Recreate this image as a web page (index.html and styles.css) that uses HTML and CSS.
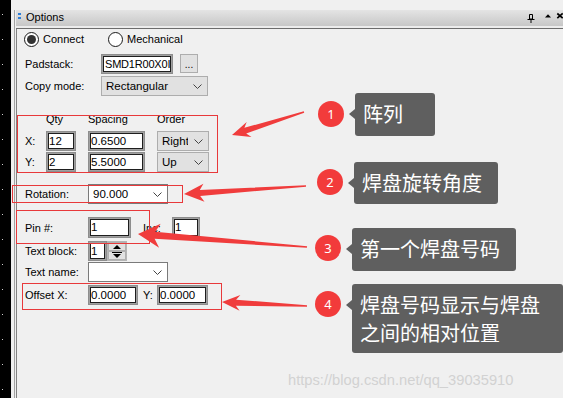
FILE: index.html
```html
<!DOCTYPE html>
<html>
<head>
<meta charset="utf-8">
<link rel="stylesheet" href="styles.css">
</head>
<body>
<div class="screen">
  <div class="rail"></div>
  <div class="panel">
    <div class="titlebar">
      <span class="grip"></span>
      <span class="title">Options</span>
      <svg class="tb-icons" width="36" height="16" viewBox="0 0 36 16">
        <path d="M2.5 4.5h3v4.5h-3z" fill="none" stroke="#000"/>
        <path d="M0.5 9.5h7M4 10v3" stroke="#000" fill="none"/>
        <path d="M18 7.5h6l-3-3.2z" fill="#000"/>
        <path d="M30.3 3.5l5.4 4.6M35.7 3.5l-5.4 4.6" stroke="#000" stroke-width="1.7"/>
      </svg>
    </div>
    <div class="content">
      <div class="row radios">
        <label class="radio first"><span class="circle checked"></span>Connect</label>
        <label class="radio"><span class="circle"></span>Mechanical</label>
      </div>
      <div class="row r-padstack">
        <span class="lbl wide">Padstack:</span>
        <span class="in w72 tight">SMD1R00X0I</span>
        <span class="btn">...</span>
      </div>
      <div class="row r-copy">
        <span class="lbl wide">Copy mode:</span>
        <span class="dd gray w107"><span class="dd-text">Rectangular</span><svg class="chev" width="9" height="5" viewBox="0 0 9 5"><path d="M0.5 0.5l4 4 4-4" fill="none" stroke="#444"/></svg></span>
      </div>
      <div class="array">
        <span></span><span class="hd">Qty</span><span class="hd">Spacing</span><span class="hd">Order</span>
        <span class="ax">X:</span><span class="in">12</span><span class="in">0.6500</span>
        <span class="dd gray"><span class="dd-text clip">Right</span><svg class="chev" width="9" height="5" viewBox="0 0 9 5"><path d="M0.5 0.5l4 4 4-4" fill="none" stroke="#444"/></svg></span>
        <span class="ax">Y:</span><span class="in">2</span><span class="in">5.5000</span>
        <span class="dd gray"><span class="dd-text">Up</span><svg class="chev" width="9" height="5" viewBox="0 0 9 5"><path d="M0.5 0.5l4 4 4-4" fill="none" stroke="#444"/></svg></span>
      </div>
      <div class="row r-rot">
        <span class="lbl">Rotation:</span>
        <span class="dd white w80"><span class="dd-text">90.000</span><svg class="chev" width="9" height="5" viewBox="0 0 9 5"><path d="M0.5 0.5l4 4 4-4" fill="none" stroke="#444"/></svg></span>
      </div>
      <div class="row r-pin">
        <span class="lbl">Pin #:</span>
        <span class="in w43">1</span>
        <span class="lbl inc">Inc:</span>
        <span class="in w28">1</span>
      </div>
      <div class="row r-block">
        <span class="lbl">Text block:</span>
        <span class="in w19">1</span>
        <span class="spin"><span class="sb up"></span><span class="sb down"></span></span>
      </div>
      <div class="row r-name">
        <span class="lbl">Text name:</span>
        <span class="dd white w80"><span class="dd-text"></span><svg class="chev" width="9" height="5" viewBox="0 0 9 5"><path d="M0.5 0.5l4 4 4-4" fill="none" stroke="#444"/></svg></span>
      </div>
      <div class="row r-off">
        <span class="lbl">Offset X:</span>
        <span class="in w50">0.0000</span>
        <span class="lbl ylbl">Y:</span>
        <span class="in w51">0.0000</span>
      </div>
    </div>
  </div>

  <div class="redbox rb1"></div>
  <div class="redbox rb2"></div>
  <div class="redbox rb3"></div>
  <div class="redbox rb4"></div>

  <svg class="arrows" width="563" height="398" viewBox="0 0 563 398">
    <polygon points="303.8,111.3 244.4,127.8 246.7,121.9 232,135 251.5,137.1 246.2,133.6 304.2,112.7"/>
    <polygon points="306,185.2 199.8,190 203.4,183.7 184,194 204.5,201.7 200.2,195.9 306,186.8"/>
    <polygon points="307.1,246.2 155.2,231.8 160.7,223.7 138,234 159.1,247.7 154.6,238.8 306.9,247.8"/>
    <polygon points="307,305.3 236.1,299.7 240.4,294.9 222,302 239.6,310.8 235.9,305.7 307,306.7"/>
  </svg>

  <div class="num n1">1</div>
  <div class="num n2">2</div>
  <div class="num n3">3</div>
  <div class="num n4">4</div>

  <div class="callout c1">阵列</div>
  <div class="callout c2">焊盘旋转角度</div>
  <div class="callout c3">第一个焊盘号码</div>
  <div class="callout c4">焊盘号码显示与焊盘<br>之间的相对位置</div>

  <div class="watermark">https://blog.csdn.net/qq_39035910</div>
</div>
</body>
</html>
```
FILE: styles.css
```css
* { box-sizing: border-box; }

body {
  margin: 0;
  width: 563px;
  height: 398px;
  overflow: hidden;
  background: #f0f0f0;
  font-family: "Liberation Sans", Arial, sans-serif;
  font-size: 11px;
  color: #000;
}

.screen {
  position: relative;
  display: flex;
  height: 398px;
}

.rail {
  width: 11px;
  flex: none;
  background-color: #000;
  background-image: linear-gradient(to bottom, #d0d0d0 0 1px, transparent 1px 25px);
  background-size: 1px 25px;
  background-repeat: repeat-y;
  background-position: 2px 14px;
}

.panel {
  flex: 1;
  min-width: 0;
  margin: 10px 0 0 3px;
  border-left: 1px solid #a3a3a3;
  padding-left: 1px;
  display: flex;
  flex-direction: column;
}

.titlebar {
  flex: none;
  height: 19px;
  display: flex;
  align-items: flex-start;
  background: linear-gradient(#e4e4e4, #c7c7c7 16px, #ececec 16px);
  border-bottom: 1px solid #6c6c6c;
  padding-left: 2px;
}

.grip {
  width: 3px;
  height: 6px;
  margin-top: 3px;
  background: linear-gradient(#2c7ed8 0 2px, transparent 2px 4px, #2c7ed8 4px 6px);
}

.title {
  margin-left: 5px;
  line-height: 15px;
  font-size: 11px;
}

.tb-icons {
  margin-left: auto;
  display: block;
}

.content {
  flex: 1;
  border-left: 1px solid #828282;
  padding-left: 7px;
  display: flex;
  flex-direction: column;
}

.row {
  display: flex;
  align-items: center;
  height: 20px;
  flex: none;
  padding-left: 1px;
  white-space: nowrap;
}

.radios { padding-left: 0; }
.r-padstack { margin-top: 5px; }
.r-copy { margin-top: 2px; }
.r-rot { margin-top: 12px; }
.r-pin { margin-top: 13px; height: 21px; }
.r-block { margin-top: 3px; }
.r-name { margin-top: 1px; }
.r-off { margin-top: 3px; }

.radio {
  display: flex;
  align-items: center;
  font-size: 11px;
}
.radio.first { width: 84px; }

.circle {
  width: 15px;
  height: 15px;
  border-radius: 50%;
  border: 1px solid #1a1a1a;
  background: #fff;
  margin-right: 4px;
  display: grid;
  place-items: center;
}
.circle.checked::after {
  content: "";
  width: 9px;
  height: 9px;
  border-radius: 50%;
  background: #333;
}

.lbl {
  width: 63px;
  flex: none;
}
.lbl.wide { width: 76px; }
.lbl.inc { width: 29px; margin-left: 12px; }
.lbl.ylbl { width: 14px; margin-left: 5px; }

.in {
  display: block;
  height: 20px;
  flex: none;
  border: 1px solid #8d8d8d;
  background: #fff;
  box-shadow: inset 0 0 0 1px #a0a0a0, inset 0 0 0 2px #1e1e1e;
  padding: 0 2px 0 2px;
  line-height: 18px;
  font-size: 11.5px;
  overflow: hidden;
  white-space: nowrap;
}
.in.tight { font-size: 11px; letter-spacing: -0.2px; padding-left: 3px; }
.r-pin .in { height: 21px; line-height: 19px; }

.w72 { width: 72px; }
.w43 { width: 43px; }
.w28 { width: 28px; }
.w19 { width: 19px; }
.w50 { width: 50px; }
.w51 { width: 51px; }
.w80 { width: 80px; }
.w107 { width: 107px; }

.btn {
  width: 18px;
  height: 19px;
  margin-left: 7px;
  background: #e1e1e1;
  border: 1px solid #adadad;
  text-align: center;
  line-height: 19px;
  font-size: 10px;
  align-self: flex-start;
}

.dd {
  display: flex;
  align-items: center;
  height: 20px;
  flex: none;
  padding-left: 4px;
  padding-right: 5px;
  font-size: 11.5px;
}
.dd.gray { background: #e1e1e1; border: 1px solid #adadad; }
.dd.white { background: #fff; border: 1px solid #7a7a7a; }
.dd-text { flex: 1; overflow: hidden; white-space: nowrap; }
.dd-text.clip { flex: none; width: 26px; }
.chev { display: block; margin-left: auto; flex: none; }

.array {
  display: grid;
  grid-template-columns: 9px 30px 57px 52px;
  grid-template-rows: 18px 20px 20px;
  column-gap: 12px;
  row-gap: 1px;
  margin-top: 16px;
  padding-left: 1px;
  white-space: nowrap;
  align-items: center;
}
.array .hd { align-self: start; line-height: 14px; }
.array .ax { overflow: visible; }

.spin {
  width: 20px;
  height: 20px;
  display: flex;
  flex-direction: column;
  border: 1px solid #b5b5b5;
  background: #e1e1e1;
}
.sb {
  flex: 1;
  position: relative;
  border: 1px solid #b0b0b0;
  background: #e1e1e1;
}
.sb.up::after {
  content: "";
  position: absolute;
  left: 4px;
  top: 2px;
  border-left: 4px solid transparent;
  border-right: 4px solid transparent;
  border-bottom: 4px solid #000;
}
.sb.down::before {
  content: "";
  position: absolute;
  left: 3px;
  top: 0;
  width: 10px;
  height: 1px;
  background: #000;
}
.sb.down::after {
  content: "";
  position: absolute;
  left: 4px;
  top: 2px;
  border-left: 4px solid transparent;
  border-right: 4px solid transparent;
  border-top: 4px solid #000;
}

/* annotations */
.redbox {
  position: absolute;
  border: 1px solid #e8393b;
}
.rb1 { left: 17px; top: 115px; width: 201px; height: 58px; }
.rb2 { left: 12px; top: 185px; width: 171px; height: 18px; }
.rb3 { left: 16px; top: 210px; width: 134px; height: 34px; }
.rb4 { left: 22px; top: 283px; width: 200px; height: 27px; }

.arrows {
  position: absolute;
  left: 0;
  top: 0;
  fill: #f03c3c;
}

.num {
  position: absolute;
  width: 26px;
  height: 26px;
  border-radius: 50%;
  background: #f23b3b;
  color: #fff;
  font-family: "Noto Sans", "Liberation Sans", sans-serif;
  font-size: 13px;
  line-height: 26px;
  text-align: center;
}
.n1 { left: 318px; top: 101px; }
.n2 { left: 317px; top: 169px; }
.n3 { left: 315px; top: 235px; }
.n4 { left: 315px; top: 291px; }

.callout {
  position: absolute;
  background: #5f5f5f;
  color: #fff;
  border-radius: 3px;
  font-family: "Noto Sans CJK SC", "Noto Sans", sans-serif;
  font-size: 20px;
  line-height: 28px;
  padding: 7px 0 0 8px;
  white-space: nowrap;
}
.callout::before {
  content: "";
  position: absolute;
  left: -6px;
  top: 16px;
  border-top: 5px solid transparent;
  border-bottom: 5px solid transparent;
  border-right: 6px solid #5f5f5f;
}
.c1 { left: 355px; top: 93px; width: 80px; height: 43px; }
.c2 { left: 354px; top: 162px; width: 144px; height: 42px; }
.c3 { left: 352px; top: 228px; width: 164px; height: 43px; }
.c4 { left: 352px; top: 284px; width: 211px; height: 69px; }

.watermark {
  position: absolute;
  left: 288px;
  top: 371px;
  font-family: "Liberation Sans", Arial, sans-serif;
  font-size: 14.7px;
  line-height: 18px;
  color: #d2d2d2;
  white-space: nowrap;
}
```
